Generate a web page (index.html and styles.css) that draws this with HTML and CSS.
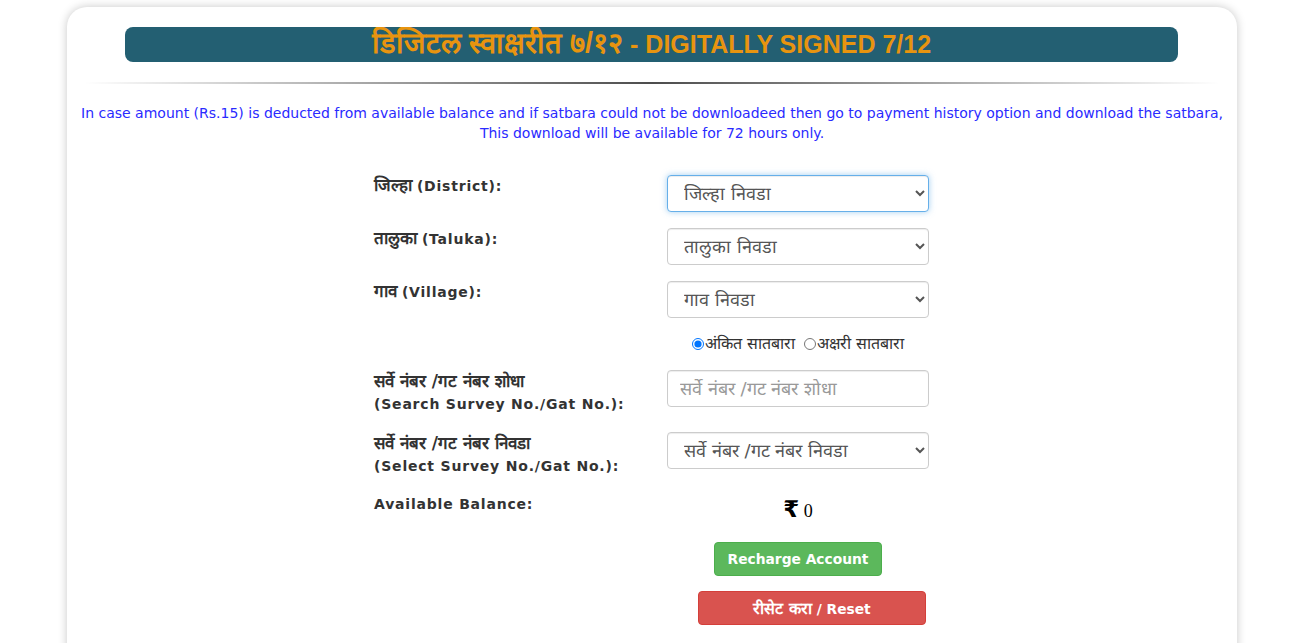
FILE: index.html
```html
<!DOCTYPE html>
<html lang="mr">
<head>
    <meta charset="UTF-8">
    <meta name="viewport" content="width=device-width, initial-scale=1.0">
    <title>डिजिटल स्वाक्षरीत ७/१२</title>
    <link rel="stylesheet" href="styles.css">
</head>
<body>
    <div class="card">
        <h1 class="title"><span class="dev">डिजिटल स्वाक्षरीत ७/१२</span> - DIGITALLY SIGNED 7/12</h1>
        <hr class="divider">
        <p class="notice">In case amount (Rs.15) is deducted from available balance and if satbara could not be downloadeed then go to payment history option and download the satbara,<br>This download will be available for 72 hours only.</p>

        <form class="form" id="satbaraForm">
            <label class="label" for="district"><span class="dev">जिल्हा</span> <span class="en">(District):</span></label>
            <select id="district" class="control focused">
                <option>जिल्हा निवडा</option>
            </select>

            <label class="label" for="taluka"><span class="dev">तालुका</span> <span class="en">(Taluka):</span></label>
            <select id="taluka" class="control">
                <option>तालुका निवडा</option>
            </select>

            <label class="label" for="village"><span class="dev">गाव</span> <span class="en">(Village):</span></label>
            <select id="village" class="control">
                <option>गाव निवडा</option>
            </select>

            <div></div>
            <div class="radios">
                <label><input type="radio" name="type" checked>अंकित सातबारा</label>
                <label><input type="radio" name="type">अक्षरी सातबारा</label>
            </div>

            <label class="label two-line" for="search"><span class="dev">सर्वे नंबर /गट नंबर शोधा</span><br><span class="en">(Search Survey No./Gat No.):</span></label>
            <input type="text" id="search" class="control" placeholder="सर्वे नंबर /गट नंबर शोधा">

            <label class="label two-line" for="survey"><span class="dev">सर्वे नंबर /गट नंबर निवडा</span><br><span class="en">(Select Survey No./Gat No.):</span></label>
            <select id="survey" class="control">
                <option>सर्वे नंबर /गट नंबर निवडा</option>
            </select>

            <div class="label"><span class="en">Available Balance:</span></div>
            <div class="balance"><span class="rupee">₹</span> 0</div>

            <div></div>
            <div class="actions">
                <button type="button" class="btn btn-green">Recharge Account</button>
                <button type="reset" class="btn btn-red"><span class="dev">रीसेट करा</span> / Reset</button>
            </div>
        </form>
    </div>
</body>
</html>
```

FILE: styles.css
```css
body {
    margin: 0;
    background-color: #fff;
    font-family: "DejaVu Sans", Verdana, sans-serif;
    color: #333;
}
.card {
    width: 1170px;
    margin: 7px 0 0 67px;
    min-height: 700px;
    background-color: #fff;
    border-radius: 20px;
    box-shadow: 0 0 10px rgba(0, 0, 0, 0.22);
    overflow: hidden;
}
.title {
    width: 1053px;
    margin: 20px 0 0 58px;
    height: 35px;
    line-height: 33px;
    background-color: #235f72;
    border-radius: 8px;
    color: #e8940f;
    font-family: "Liberation Sans", Arial, sans-serif;
    font-size: 25px;
    font-weight: bold;
    text-align: center;
    overflow: hidden;
}
.title .dev {
    font-size: 29px;
}
.divider {
    height: 2px;
    margin: 20px 17px 0;
    border: 0;
    background-image: linear-gradient(to right, rgba(0, 0, 0, 0), rgba(0, 0, 0, 0.7), rgba(0, 0, 0, 0));
}
.notice {
    margin: 19px 0 0;
    padding: 0 8px;
    color: #2a2aff;
    font-size: 14px;
    line-height: 20px;
    text-align: center;
}
.form {
    display: grid;
    grid-template-columns: 293px 262px;
    row-gap: 16px;
    width: 555px;
    margin: 32px 0 0 307px;
}
.label {
    font-size: 14px;
    font-weight: bold;
    line-height: 20px;
    color: #333;
}
.label .dev {
    font-size: 17px;
}
.label .en {
    letter-spacing: 0.8px;
}
.two-line {
    line-height: 22px;
    min-height: 46px;
}
.control {
    box-sizing: border-box;
    width: 262px;
    height: 37px;
    padding: 4px 12px;
    border: 1px solid #ccc;
    border-radius: 4px;
    background-color: #fff;
    color: #555;
    font-family: "DejaVu Sans", sans-serif;
    font-size: 18px;
    box-shadow: inset 0 1px 1px rgba(0, 0, 0, 0.075);
}
.control::placeholder {
    color: #999;
}
.focused {
    border-color: #66afe9;
    box-shadow: inset 0 1px 1px rgba(0, 0, 0, 0.075), 0 0 6px rgba(102, 175, 233, 0.6);
}
.radios {
    display: flex;
    justify-content: center;
    gap: 8px;
    height: 20px;
    font-size: 16px;
    line-height: 20px;
    color: #333;
}
.radios input {
    width: 12px;
    height: 12px;
    margin: 0 1px 0 0;
    vertical-align: -1px;
}
.balance {
    height: 30px;
    line-height: 30px;
    text-align: center;
    font-family: "Liberation Serif", "Times New Roman", serif;
    font-size: 18px;
    color: #000;
}
.rupee {
    font-family: "DejaVu Sans", sans-serif;
    font-weight: bold;
    font-size: 23px;
}
.actions {
    display: flex;
    flex-direction: column;
    align-items: center;
    gap: 15px;
    margin-top: 2px;
}
.btn {
    height: 34px;
    padding: 0 12px;
    border: 1px solid;
    border-radius: 4px;
    color: #fff;
    font-family: "DejaVu Sans", Verdana, sans-serif;
    font-size: 13.8px;
    font-weight: bold;
    cursor: pointer;
}
.btn .dev {
    font-size: 16px;
}
.btn-green {
    width: 168px;
    background-color: #5cb85c;
    border-color: #4cae4c;
}
.btn-red {
    width: 228px;
    margin-left: 28px;
    background-color: #d9534f;
    border-color: #d43f3a;
}
```
